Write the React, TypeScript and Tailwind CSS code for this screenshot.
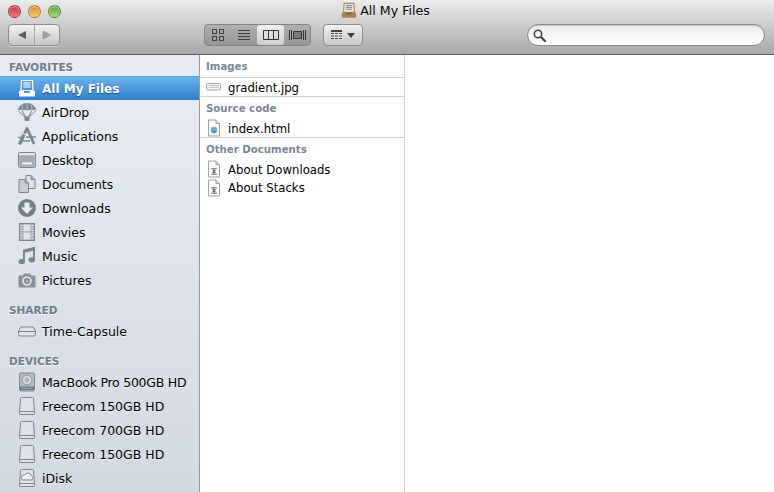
import React from 'react';

const G = '#7d8592';

const AllFiles = ({ light, size = 20 }: { light?: boolean; size?: number }) => {
  const c = light ? '#ffffff' : '#a8825a';
  return (
    <svg width={size} height={size} viewBox="0 0 20 20">
      <path d="M4.500 1.500h11l.5 10H4z" fill={light ? 'none' : '#f4efe2'} stroke={c} strokeWidth="1.200" />
      <path d="M6.500 4h7M6.500 6h7M6.500 8h7" stroke={light ? '#fff' : '#5f6f86'} strokeWidth="1" />
      <path d="M2 12h16v5.500H2z" fill={c} />
      <path d="M7 12v2h6v-2" fill={light ? '#4c97dc' : '#7d6238'} />
    </svg>
  );
};

const AirDrop = () => (
  <svg width="20" height="20" viewBox="0 0 20 20">
    <path d="M1 8.500a9 7.500 0 0 1 18 0c-1.500-1-3-1-4.500 0-1.400-1-3-1-4.500 0-1.500-1-3.100-1-4.500 0-1.500-1-3-1-4.500 0z" fill={G} />
    <path d="M6 2.500c-1 2-1 4-.5 6M14 2.500c1 2 1 4 .5 6M10 1v7.500" stroke="#b9bfc9" fill="none" />
    <path d="M1.500 9 8 15M18.500 9 12 15M5.500 9 8.500 15M14.500 9 11.500 15" stroke={G} fill="none" />
    <rect x="7.500" y="14.500" width="5" height="4.500" rx="1" fill={G} />
  </svg>
);

const Apps = () => (
  <svg width="20" height="20" viewBox="0 0 20 20">
    <path d="M10.500 1.500 7.500 7.500M10 2l7 16" stroke={G} strokeWidth="2.800" fill="none" />
    <path d="M7 8.500 2.500 18.500" stroke={G} strokeWidth="3.200" fill="none" />
    <path d="M1 11.500h4.500M9 11h10M13 15H6" stroke={G} strokeWidth="1.400" fill="none" />
  </svg>
);

const Desktop = () => (
  <svg width="20" height="20" viewBox="0 0 20 20">
    <rect x="1.500" y="2.500" width="17" height="15" rx="1.500" fill="#c8ccd4" stroke={G} />
    <rect x="2" y="3" width="16" height="2" fill="#e3e6eb" />
    <rect x="2.500" y="5.500" width="15" height="11" fill="#a3aab5" />
    <path d="M4.500 14.500h11l-1-2.200h-9z" fill="#eef0f4" />
  </svg>
);

const Docs = () => (
  <svg width="20" height="20" viewBox="0 0 20 20">
    <path d="M9 1.500h5l4 4v9H9z" fill="#dfe2e8" stroke={G} />
    <path d="M14 1.500v4h4" fill="#aab0bb" stroke={G} />
    <path d="M2 5.500h6l3.500 3.500v9.500H2z" fill="#c8ccd4" stroke={G} />
    <path d="M8 5.500V9h3.500" fill="#aab0bb" stroke={G} />
  </svg>
);

const Down = () => (
  <svg width="20" height="20" viewBox="0 0 20 20">
    <circle cx="10" cy="10" r="9" fill="#757d8a" />
    <path d="M7.500 4.500h5v5H16l-6 6.500-6-6.500h3.500z" fill="#e9ecf1" />
  </svg>
);

const Movies = () => (
  <svg width="20" height="20" viewBox="0 0 20 20">
    <rect x="2.500" y="1.500" width="15" height="17" fill="#a3a9b4" stroke={G} />
    <path d="M6.500 2.500h7v6.800h-7zM6.500 10.500h7v7h-7z" fill="#dfe2e8" />
    <path d="M3.500 3.500h2M3.500 6h2M3.500 8.500h2M3.500 11h2M3.500 13.500h2M3.500 16h2M14.500 3.500h2M14.500 6h2M14.500 8.500h2M14.500 11h2M14.500 13.500h2M14.500 16h2" stroke="#e5e8ed" strokeWidth="1.200" />
  </svg>
);

const Music = () => (
  <svg width="20" height="20" viewBox="0 0 20 20">
    <path d="M7 15V4.500L17 2v11" stroke={G} strokeWidth="2" fill="none" />
    <path d="M7.500 3.800 17 1.500v3L7.500 6.800z" fill={G} />
    <ellipse cx="4.800" cy="15.500" rx="3.300" ry="2.600" fill={G} />
    <ellipse cx="14.800" cy="13.800" rx="3.300" ry="2.600" fill={G} />
  </svg>
);

const Camera = () => (
  <svg width="20" height="20" viewBox="0 0 20 20">
    <path d="M2.500 5.500H6L7 3.500h6l1 2h3.500a1 1 0 0 1 1 1v10a1 1 0 0 1-1 1h-15a1 1 0 0 1-1-1v-10a1 1 0 0 1 1-1z" fill="#89909c" />
    <circle cx="10" cy="11" r="4.800" fill="#dfe2e8" />
    <circle cx="10" cy="11" r="3" fill="#7d8592" />
    <circle cx="10" cy="11" r="1.500" fill="#aeb4be" />
  </svg>
);

const Capsule = () => (
  <svg width="20" height="20" viewBox="0 0 20 20">
    <path d="M1.500 10 4 6h12l2.500 4v3.500A1.500 1.500 0 0 1 17 15H3a1.500 1.500 0 0 1-1.500-1.500z" fill="#dfe2e8" stroke={G} />
    <path d="M1.500 10.500h17" stroke={G} />
  </svg>
);

const MacHd = () => (
  <svg width="20" height="20" viewBox="0 0 20 20">
    <rect x="2.500" y="1" width="15" height="18" rx="1.500" fill="#b4bac4" stroke={G} />
    <circle cx="10" cy="8" r="5" fill="#cfd3da" stroke="#8d949f" />
    <circle cx="10" cy="8" r="1.500" fill="none" stroke="#8d949f" />
    <rect x="3" y="14.500" width="14" height="3.500" fill="#6f7783" />
    <path d="M4.500 16.200h11" stroke="#d5d8de" strokeDasharray="1 1" />
  </svg>
);

const Hd = () => (
  <svg width="20" height="20" viewBox="0 0 20 20">
    <path d="M4.500 1.500h11a1 1 0 0 1 1 1l1 14.500a1.500 1.500 0 0 1-1.500 1.500H4A1.500 1.500 0 0 1 2.500 17l1-14.500a1 1 0 0 1 1-1z" fill="#dfe2e8" stroke={G} />
    <path d="M2.500 15.500h15" stroke={G} />
  </svg>
);

const IDisk = () => (
  <svg width="20" height="20" viewBox="0 0 20 20">
    <path d="M4.500 1.500h11a1 1 0 0 1 1 1l1 14.500a1.500 1.500 0 0 1-1.500 1.500H4A1.500 1.500 0 0 1 2.500 17l1-14.500a1 1 0 0 1 1-1z" fill="#dfe2e8" stroke={G} />
    <path d="M2.500 15.500h15" stroke={G} />
    <path d="M6 12h8a2 2 0 0 0 .3-4 3.500 3.500 0 0 0-6.600-1A2.500 2.500 0 0 0 6 12z" fill="#eef0f3" stroke={G} />
  </svg>
);

const Jpg = () => (
  <svg width="16" height="16" viewBox="0 0 16 16">
    <rect x="0.500" y="4.500" width="14" height="6.500" rx="1" fill="#f2f2f2" stroke="#a9a9a9" />
    <path d="M2.500 6.500h10M2.500 8.500h10" stroke="#c4c4c4" />
  </svg>
);

const PageIcon = ({ html }: { html?: boolean }) => (
  <svg width="16" height="18" viewBox="0 0 16 18">
    <path d="M2.500 1h7.500l3.500 3.500V17h-11z" fill="#fbfbfb" stroke="#a0a0a0" />
    <path d="M10 1v3.500h3.500" fill="#e4e4e4" stroke="#a0a0a0" />
    {html ? (
      <>
        <circle cx="8" cy="11" r="3.300" fill="#7aa6cf" />
        <path d="M5.500 11.500c1.500 2 3.500 2 5 0" stroke="#2f6fa8" fill="none" />
      </>
    ) : (
      <>
        <path d="M5 8.500h6M5 14.500h6" stroke="#9a9a9a" />
        <path d="M6 9.500l4 4M10 9.500l-4 4M8 8.500v6" stroke="#555" />
      </>
    )}
  </svg>
);

const SectionHead = ({ label, first }: { label: string; first?: boolean }) => (
  <div
    className={`${first ? 'pt-[4px] pb-0 leading-[17px]' : 'pt-[10px] leading-[17px]'} pl-[9px] text-[10.5px] font-bold text-[#727b8b] [text-shadow:0_1px_0_rgba(255,255,255,.7)]`}
  >
    {label}
  </div>
);

const SideRow = ({
  icon,
  label,
  active,
  tight,
}: {
  icon: React.ReactNode;
  label: string;
  active?: boolean;
  tight?: boolean;
}) => (
  <div
    className={`flex h-6 items-center gap-[5px] pl-[17px] whitespace-nowrap ${
      active
        ? 'border-t border-[#5aa2dd] bg-gradient-to-b from-[#6cb2ea] to-[#2d7ecf] text-[12px] font-bold text-white [text-shadow:0_1px_1px_rgba(0,0,0,.45)]'
        : 'text-[12.5px] text-black [text-shadow:0_1px_0_rgba(255,255,255,.6)]'
    }`}
  >
    <span className="flex w-5 shrink-0 justify-center">{icon}</span>
    <span className={`${active ? 'pt-px' : 'pt-[2px]'} ${tight ? 'tracking-[-0.25px]' : ''}`}>{label}</span>
  </div>
);

const ColHead = ({ label, top }: { label: string; top: string }) => (
  <div className={`${top} pl-[6px] text-[10.2px] font-bold leading-[18px] text-[#7b8799]`}>{label}</div>
);

const FileRow = ({ icon, label, h, pad }: { icon: React.ReactNode; label: string; h: string; pad: string }) => (
  <div className={`flex ${h} items-center text-[11.7px] leading-4 whitespace-nowrap text-black`}>
    <span className="flex w-7 shrink-0 justify-center">{icon}</span>
    <span className={pad}>{label}</span>
  </div>
);

const Dot = ({ cls }: { cls: string }) => (
  <span className={`h-[13px] w-[13px] rounded-full border border-black/30 shadow-[inset_0_1px_1px_rgba(255,255,255,.6)] ${cls}`} />
);

const App: React.FC = () => {
  return (
    <div className="flex h-[492px] w-[774px] flex-col overflow-hidden bg-white font-['DejaVu_Sans',sans-serif]">
      {/* toolbar */}
      <div className="h-[55px] shrink-0 border-b border-[#5f5f5f] bg-gradient-to-b from-[#ececec] to-[#a8a8a8]">
        <div className="grid h-[23px] grid-cols-[1fr_auto_1fr] items-center">
          <div className="flex gap-[7px] pl-2">
            <Dot cls="bg-gradient-to-b from-[#c7303a] to-[#f27c80]" />
            <Dot cls="bg-gradient-to-b from-[#d98a18] to-[#f9cf6c]" />
            <Dot cls="bg-gradient-to-b from-[#58a02e] to-[#a9dc7b]" />
          </div>
          <div className="flex items-center gap-[2px] pr-1 text-[12.6px] text-black [text-shadow:0_1px_0_rgba(255,255,255,.5)]">
            <AllFiles size={18} />
            All My Files
          </div>
          <div />
        </div>
        <div className="mt-px flex h-[22px] items-stretch pl-2 pr-[9px]">
          <div className="flex w-[52px] rounded-[4px] border border-[#8e8e8e] bg-gradient-to-b from-[#f3f3f3] to-[#c6c6c6] shadow-[0_1px_0_rgba(255,255,255,.4)]">
            <div className="flex w-[26px] items-center justify-center border-r border-[#a3a3a3]">
              <svg width="10" height="10" viewBox="0 0 10 10">
                <path d="M9 1v8L1 5z" fill="#5d5d5d" />
              </svg>
            </div>
            <div className="flex flex-1 items-center justify-center">
              <svg width="10" height="10" viewBox="0 0 10 10">
                <path d="M1 1v8l8-4z" fill="#a3a3a3" stroke="#8a8a8a" strokeWidth=".5" />
              </svg>
            </div>
          </div>

          <div className="ml-[144px] flex w-[107px] items-stretch rounded-[4px] border border-[#858585] bg-gradient-to-b from-[#b0b0b0] to-[#969696]">
            <div className="flex w-[26px] items-center justify-center">
              <svg width="12" height="12" viewBox="0 0 12 12">
                <path d="M.5.500h4v4h-4zM7.500.500h4v4h-4zM.5 7.500h4v4h-4zM7.500 7.500h4v4h-4z" fill="none" stroke="#3c3c3c" />
              </svg>
            </div>
            <div className="flex w-[26px] items-center justify-center">
              <svg width="12" height="12" viewBox="0 0 12 12">
                <path d="M0 1.500h12M0 4.500h12M0 7.500h12M0 10.500h12" stroke="#3c3c3c" />
              </svg>
            </div>
            <div className="flex w-[27px] items-center justify-center rounded-[3px] bg-gradient-to-b from-[#f1f1f1] to-[#cdcdcd]">
              <svg width="16" height="12" viewBox="0 0 16 12">
                <path d="M.5 1.500h15v9H.5zM5.500 1.500v9M10.500 1.500v9" fill="none" stroke="#333" />
              </svg>
            </div>
            <div className="flex flex-1 items-center justify-center">
              <svg width="17" height="10" viewBox="0 0 17 10">
                <path d="M.5 0v10M2.500 0v10M14.500 0v10M16.500 0v10" stroke="#333" />
                <path d="M4.500 1.500h8v7h-8z" fill="#777" stroke="#333" />
              </svg>
            </div>
          </div>

          <div className="ml-3 flex w-10 items-center justify-center gap-[5px] rounded-[4px] border border-[#8e8e8e] bg-gradient-to-b from-[#f3f3f3] to-[#c6c6c6]">
            <svg width="11" height="10" viewBox="0 0 11 10">
              <path d="M0 1h11" stroke="#444" strokeWidth="2" />
              <path d="M0 3.500h3M4 3.500h3M8 3.500h3M0 6h3M4 6h3M8 6h3M0 8.500h3M4 8.500h3M8 8.500h3" stroke="#555" />
            </svg>
            <svg width="8" height="5" viewBox="0 0 8 5">
              <path d="M0 0h8L4 5z" fill="#444" />
            </svg>
          </div>

          <div className="ml-auto flex w-[238px] items-center rounded-full border border-[#8a8a8a] bg-gradient-to-b from-[#ececec] to-white pl-[5px] shadow-[inset_0_1px_1px_rgba(0,0,0,.15)]">
            <svg width="13" height="13" viewBox="0 0 13 13">
              <circle cx="5" cy="5" r="3.700" fill="none" stroke="#444" strokeWidth="1.600" />
              <path d="M8 8l4 4" stroke="#444" strokeWidth="2.200" strokeLinecap="round" />
            </svg>
          </div>
        </div>
      </div>

      <div className="flex min-h-0 flex-1">
        {/* sidebar */}
        <div className="w-[200px] shrink-0 border-r border-[#9c9c9c] bg-gradient-to-b from-[#e9edf3] to-[#d3d9e2]">
          <SectionHead label="FAVORITES" first />
          <SideRow icon={<AllFiles light />} label="All My Files" active />
          <SideRow icon={<AirDrop />} label="AirDrop" />
          <SideRow icon={<Apps />} label="Applications" />
          <SideRow icon={<Desktop />} label="Desktop" />
          <SideRow icon={<Docs />} label="Documents" />
          <SideRow icon={<Down />} label="Downloads" />
          <SideRow icon={<Movies />} label="Movies" />
          <SideRow icon={<Music />} label="Music" />
          <SideRow icon={<Camera />} label="Pictures" />
          <SectionHead label="SHARED" />
          <SideRow icon={<Capsule />} label="Time-Capsule" />
          <SectionHead label="DEVICES" />
          <SideRow icon={<MacHd />} label="MacBook Pro 500GB HD" tight />
          <SideRow icon={<Hd />} label="Freecom 150GB HD" />
          <SideRow icon={<Hd />} label="Freecom 700GB HD" />
          <SideRow icon={<Hd />} label="Freecom 150GB HD" />
          <SideRow icon={<IDisk />} label="iDisk" />
        </div>

        {/* file column */}
        <div className="w-[205px] shrink-0 border-r border-[#d4d4d4]">
          <div className="h-[23px] border-b border-[#d2d2d2]">
            <ColHead label="Images" top="pt-[3px]" />
          </div>
          <div className="border-b border-[#d2d2d2]">
            <FileRow icon={<Jpg />} label="gradient.jpg" h="h-[18px]" pad="pt-[2px]" />
          </div>
          <ColHead label="Source code" top="pt-[3px]" />
          <div className="border-b border-[#d2d2d2]">
            <FileRow icon={<PageIcon html />} label="index.html" h="h-[19px]" pad="pt-[3px]" />
          </div>
          <ColHead label="Other Documents" top="pt-[3px]" />
          <FileRow icon={<PageIcon />} label="About Downloads" h="h-[20px]" pad="pt-[2px]" />
          <FileRow icon={<PageIcon />} label="About Stacks" h="h-[17px]" pad="pt-0" />
        </div>

        <div className="flex-1 bg-white" />
      </div>
    </div>
  );
};

export default App;
